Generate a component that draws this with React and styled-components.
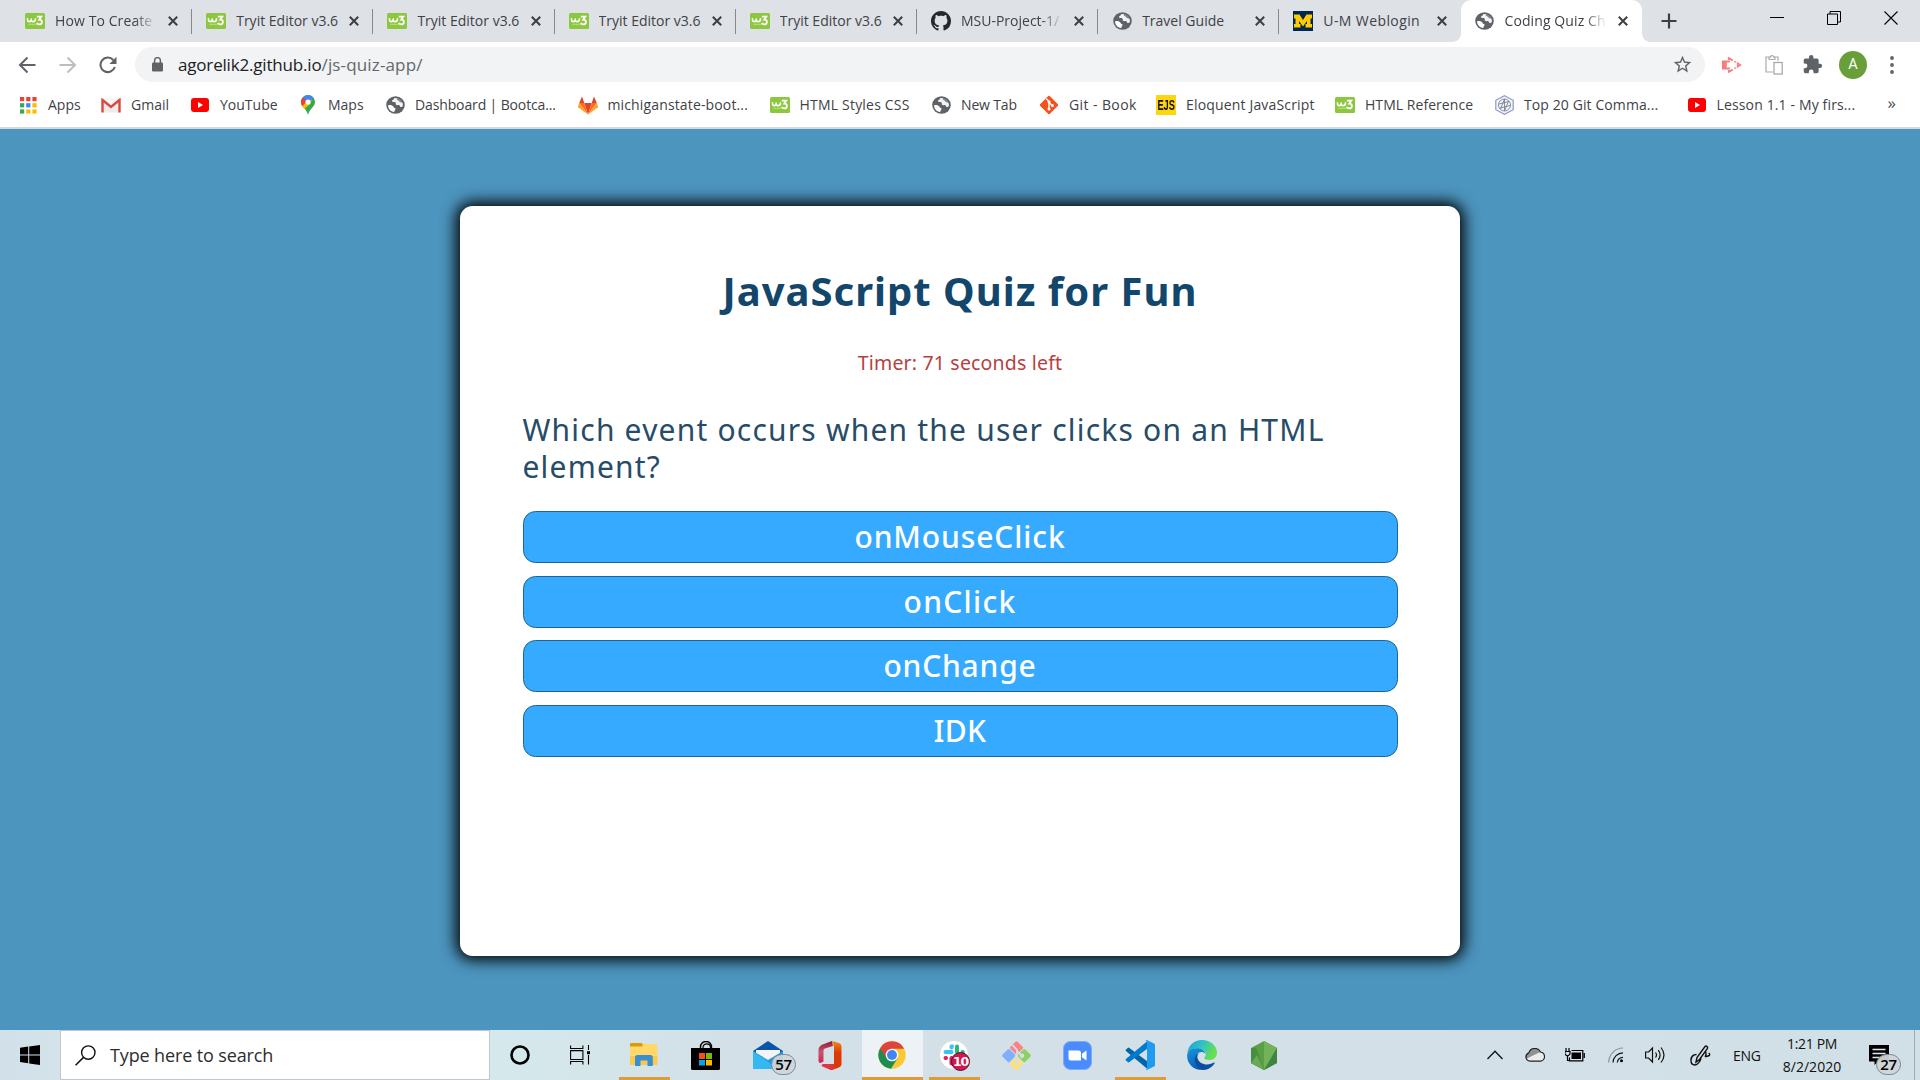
import React from "react";
import styled, { createGlobalStyle } from "styled-components";

const GlobalStyle = createGlobalStyle`
  * { box-sizing: border-box; }
  html, body { margin: 0; padding: 0; }
  body { font-family: "Open Sans", "Noto Sans", sans-serif; overflow: hidden; }
  svg { display: block; flex: none; }
`;

const Screen = styled.div`
  width: 1920px;
  height: 1080px;
  display: flex;
  flex-direction: column;
  overflow: hidden;
  background: #fff;
`;

/* ---------- tab strip ---------- */
const TabStrip = styled.div`
  height: 42px;
  display: flex;
  background: #dee1e6;
  padding-left: 11px;
`;

const Tab = styled.div`
  position: relative;
  width: 181.2px;
  flex: none;
  display: flex;
  align-items: center;
  padding: 0 14px 0 14px;
  background: ${(p) => (p.$active ? "#fff" : "transparent")};
  border-radius: 10px 10px 0 0;
  &::after {
    content: "";
    display: ${(p) => (p.$divider ? "block" : "none")};
    position: absolute;
    right: 0;
    top: 9px;
    width: 1px;
    height: 25px;
    background: #85888c;
  }
`;

const Flare = styled.i`
  position: absolute;
  bottom: 0;
  ${(p) => p.$side}: -8px;
  width: 8px;
  height: 8px;
  background: radial-gradient(
    circle at ${(p) => (p.$side === "left" ? "0 0" : "100% 0")},
    transparent 7.5px,
    #fff 8px
  );
`;

const TabIcon = styled.span`
  width: 20px;
  height: 20px;
  display: grid;
  place-items: center;
  flex: none;
`;

const TabTitle = styled.span`
  width: 102px;
  margin-left: 10px;
  overflow: hidden;
  white-space: nowrap;
  font-size: 14px;
  line-height: 22px;
  letter-spacing: ${(p) => p.$ls || 0}px;
  color: #3f4246;
  ${(p) => p.$fade && "mask-image: linear-gradient(90deg, #000 78%, transparent 100%);"}
`;

const TabClose = styled.span`
  margin-left: auto;
`;

const NewTab = styled.div`
  width: 54px;
  display: grid;
  place-items: center;
`;

const WindowControls = styled.div`
  margin-left: auto;
  display: flex;
  padding-bottom: 6px;
`;

const WindowButton = styled.div`
  width: ${(p) => p.$w || 57.5}px;
  display: grid;
  place-items: center;
`;

/* ---------- toolbar ---------- */
const Toolbar = styled.div`
  height: 45px;
  display: flex;
  align-items: center;
  padding-left: 18px;
`;

const NavButton = styled.div`
  width: ${(p) => p.$w}px;
  display: flex;
`;

const AddressBar = styled.div`
  width: 1570px;
  height: 35px;
  border-radius: 18px;
  background: #f1f3f4;
  display: flex;
  align-items: center;
  padding: 0 12px 0 17px;
`;

const Url = styled.span`
  margin-left: 15px;
  flex: 1;
  font-size: 17px;
  line-height: 26px;
  letter-spacing: -0.18px;
  color: #202124;
`;

const UrlPath = styled.span`
  letter-spacing: 0.15px;
  color: #63676c;
`;

const Extensions = styled.div`
  flex: 1;
  display: flex;
  align-items: center;
  padding-left: 17px;
`;

const ExtensionSlot = styled.div`
  width: ${(p) => p.$w}px;
  display: flex;
`;

const Avatar = styled.div`
  width: 28px;
  height: 28px;
  border-radius: 50%;
  background: #689f38;
  color: #fff;
  display: grid;
  place-items: center;
  font: 14.5px Roboto, sans-serif;
`;

/* ---------- bookmarks ---------- */
const BookmarkBar = styled.div`
  height: 42px;
  display: flex;
  align-items: center;
  padding: 0 0 4px 18px;
  border-bottom: 2px solid #d5d8dc;
`;

const Bookmark = styled.div`
  width: ${(p) => p.$w}px;
  flex: none;
  display: flex;
  align-items: center;
`;

const BookmarkIcon = styled.span`
  width: 20px;
  height: 22px;
  display: grid;
  place-items: center;
`;

const BookmarkLabel = styled.span`
  margin: 0 0 1px 10px;
  white-space: nowrap;
  font-size: 14px;
  line-height: 22px;
  letter-spacing: ${(p) => p.$ls || 0}px;
  color: #3f4246;
`;

const Overflow = styled.span`
  font-size: 17px;
  line-height: 20px;
  color: #4a4d51;
  padding-bottom: 4px;
`;

/* ---------- quiz page ---------- */
const Page = styled.main`
  height: 901px;
  background: #4c95bf;
  display: flex;
  justify-content: center;
  align-items: flex-start;
  padding-top: 77px;
  font-family: "Noto Sans", "Open Sans", sans-serif;
`;

const QuizCard = styled.section`
  width: 1000px;
  height: 750px;
  border-radius: 12.5px;
  background: #fff;
  box-shadow: 0 0 15px 4px #000;
  display: flex;
  flex-direction: column;
  padding: 60px 62.5px 0;
`;

const Title = styled.h1`
  margin: 0;
  font-size: 40px;
  font-weight: 700;
  line-height: 50px;
  letter-spacing: 1px;
  text-align: center;
  color: #12466b;
`;

const Timer = styled.p`
  margin: 35px 0 0;
  font-size: 19.5px;
  line-height: 24px;
  letter-spacing: 0.18px;
  text-align: center;
  color: #b5413f;
`;

const Question = styled.p`
  margin: 36px 0 0;
  font-size: 30px;
  line-height: 37px;
  letter-spacing: 1.2px;
  color: #264c68;
`;

const Choices = styled.div`
  margin-top: 26px;
  display: flex;
  flex-direction: column;
  gap: 12.5px;
`;

const Choice = styled.button`
  height: 52px;
  border: 1px solid #1a669b;
  border-radius: 12.5px;
  background: #35aaff;
  color: #fff;
  padding: 0 0 1px;
  font-family: inherit;
  font-size: 30px;
  font-weight: 500;
  line-height: 49px;
  letter-spacing: ${(p) => p.$ls}px;
`;

/* ---------- taskbar ---------- */
const Taskbar = styled.footer`
  height: 50px;
  display: flex;
  background: linear-gradient(90deg, #d2e0e9 0, #d4e3ea 60px, #d5e8eb 500px, #d4e6ea 590px, #d3e0e8 720px, #d3e0e7 1400px, #d1dfe7 100%);
`;

const StartButton = styled.div`
  width: 60px;
  display: grid;
  place-items: center;
`;

const SearchBox = styled.div`
  width: 430px;
  border: 1px solid #c3c6c9;
  background: #fff;
  display: flex;
  align-items: center;
  padding-left: 14px;
`;

const SearchText = styled.span`
  margin-left: 14px;
  font-size: 18px;
  line-height: 28px;
  letter-spacing: -0.13px;
  color: #2d2d2d;
`;

const TaskButton = styled.div`
  width: ${(p) => p.$w || 62}px;
  flex: none;
  display: flex;
  align-items: center;
  justify-content: center;
  padding-right: ${(p) => p.$nudge || 0}px;
  background: ${(p) => (p.$focused ? "#edf2f6" : "transparent")};
  box-shadow: ${(p) => (p.$focused ? "inset 0 -3px #e09a3b" : "none")};
`;

const OpenMark = styled.div`
  width: 51px;
  height: 50px;
  border-bottom: 3px solid ${(p) => (p.$open ? "#e09a3b" : "transparent")};
  display: grid;
  place-items: center;
  padding-top: 3px;
`;

const IconWithBadge = styled.div`
  position: relative;
  margin-left: ${(p) => p.$indent || 0}px;
`;

const Badge = styled.span`
  position: absolute;
  left: ${(p) => p.$x}px;
  top: ${(p) => p.$y}px;
  width: 25px;
  height: 21px;
  border-radius: 11px;
  border: 1px solid #7f8588;
  background: rgba(207, 213, 216, 0.94);
  color: #000;
  font-size: 15px;
  font-weight: 600;
  line-height: 19px;
  letter-spacing: -0.4px;
  text-align: center;
`;

const SlackBadge = styled.span`
  position: absolute;
  left: 12px;
  top: 12px;
  width: 19px;
  height: 19px;
  border-radius: 50%;
  border: 1px solid #4a1230;
  background: #d5174f;
  color: #fff;
  font: 700 12.5px/17px "DejaVu Sans", sans-serif;
  letter-spacing: -1.2px;
  text-align: center;
`;

const Tray = styled.div`
  margin-left: auto;
  display: flex;
  align-items: center;
`;

const TraySlot = styled.div`
  width: ${(p) => p.$w}px;
  display: flex;
`;

const Language = styled.span`
  width: 49px;
  font-size: 14px;
  line-height: 22px;
  letter-spacing: -0.3px;
  color: #111;
  padding-top: 1px;
`;

const Clock = styled.div`
  width: 60px;
  display: flex;
  flex-direction: column;
  align-items: center;
  font-size: 14px;
  line-height: 23px;
  color: #111;
`;

const ClockTime = styled.span`
  letter-spacing: -0.35px;
`;

const ShowDesktop = styled.div`
  align-self: stretch;
  width: 6px;
  border-left: 1px solid #9eabb3;
`;

/* ---------- icons ---------- */
const W3Icon = () => (
  <svg width="20" height="16" viewBox="0 0 20 16">
    <rect width="20" height="16" rx="1.5" fill="#8dc73f" />
    <path d="M2.500 5.200v1.800q0 1.600 1.700 1.600T6.200 7V5.600V7q0 1.600 1.900 1.600T10.400 7V5.200" fill="none" stroke="#fff" strokeWidth="1.600" />
    <path d="M11.800 3.600h4.600L14.200 6.600q2.700 0 2.700 2.300 0 2.500-2.600 2.500-1.700 0-2.500-1.500" fill="none" stroke="#fff" strokeWidth="1.700" />
    <path d="M3.500 11.300h8" stroke="#cfe8ac" strokeWidth="1" strokeDasharray="1.200 .5" />
  </svg>
);

const GlobeIcon = () => (
  <svg width="19" height="18" viewBox="0 0 18 18" preserveAspectRatio="none">
    <circle cx="9" cy="9" r="8.800" fill="#5f6368" />
    <path d="M2 9.200c2-.4 3.600.1 4.700 1 .8.700.5 1.400 1.500 1.700 1.300.3.900 1.300.3 2-.5.700-.4 1.400-.7 2.200C4.300 15.600 1.900 12.600 2 9.200z" fill="#fff" />
    <path d="M8 1.900c-1 1-.5 1.600-1.700 2.200-.8.400-.9 1.300-.2 1.700 1 .5 2.100-.2 2.900.6.700.9-.2 1.700.6 2.400 1 .8 2.200-.2 3 .4.900.7.600 1.900 1.600 1.900.9 0 1.500-.6 1.800-1.600.4-3.600-2.600-7.800-8-7.600z" fill="#fff" opacity=".92" />
    <path d="M10.500 2.200c-.6.900 0 1.900 1 2.200 1.200.3 1.400 1 1.300 1.700l2.900.7C15 4.300 13 2.500 10.500 2.200z" fill="#5f6368" opacity=".75" />
  </svg>
);

const GithubIcon = () => (
  <svg width="20" height="20" viewBox="0 0 16 16">
    <path fill="#24292e" d="M8 0C3.580 0 0 3.580 0 8c0 3.540 2.290 6.530 5.470 7.590.4.070.55-.17.55-.38 0-.19-.01-.82-.01-1.490-2.010.37-2.530-.49-2.690-.94-.09-.23-.48-.94-.82-1.130-.28-.15-.68-.52-.01-.53.63-.01 1.080.58 1.230.82.72 1.210 1.870.87 2.330.66.07-.52.28-.87.51-1.070-1.780-.2-3.640-.89-3.640-3.950 0-.87.31-1.590.82-2.150-.08-.2-.36-1.020.08-2.120 0 0 .67-.21 2.200.82.64-.18 1.320-.27 2-.27s1.360.09 2 .27c1.530-1.040 2.200-.82 2.200-.82.44 1.100.16 1.920.08 2.120.51.56.82 1.270.82 2.150 0 3.070-1.870 3.750-3.650 3.950.29.25.54.73.54 1.480 0 1.070-.01 1.930-.01 2.200 0 .21.15.46.55.38A8.010 8.010 0 0 0 16 8c0-4.420-3.580-8-8-8z" />
  </svg>
);

const MichiganIcon = () => (
  <svg width="20" height="20" viewBox="0 0 20 20">
    <rect width="20" height="20" fill="#00274c" />
    <path fill="#ffcb05" d="M1 3.500h5.500L10 9l3.500-5.500H19v4h-1.500V13H19v3.500h-6.500V13H14v-3l-4 5.500L6 10v3h1.500v3.500H1V13h1.500V7.500H1z" />
  </svg>
);

const CloseIcon = () => (
  <svg width="10" height="10" viewBox="0 0 10 10">
    <path d="M.8.8l8.400 8.400M9.200.8L.8 9.200" stroke="#3c4043" strokeWidth="2" />
  </svg>
);

const BackIcon = ({ color, flip }) => (
  <svg width="18" height="18" viewBox="0 0 18 18" transform={flip ? "scale(-1,1)" : undefined}>
    <path d="M17.500 9H2.200M9.500 1.500L2 9l7.500 7.500" fill="none" stroke={color} strokeWidth="2" />
  </svg>
);

const ReloadIcon = () => (
  <svg width="18" height="18" viewBox="0 0 18 18">
    <path d="M15.800 11A7.300 7.300 0 1 1 14.300 4" fill="none" stroke="#5f6368" strokeWidth="2.100" />
    <path d="M17.500.8v7.100h-7.100z" fill="#5f6368" />
  </svg>
);

const LockIcon = () => (
  <svg width="11" height="15" viewBox="0 0 11 15">
    <rect y="5.500" width="11" height="9" rx="1.200" fill="#5f6368" />
    <path d="M2.600 6V3.500a2.900 2.900 0 0 1 5.800 0V6" fill="none" stroke="#5f6368" strokeWidth="1.500" />
  </svg>
);

const StarIcon = () => (
  <svg width="21" height="21" viewBox="0 0 24 24">
    <path fill="#5f6368" d="M22 9.240l-7.190-.62L12 2 9.190 8.630 2 9.240l5.460 4.730L5.820 21 12 17.270 18.180 21l-1.630-7.030L22 9.240zM12 15.400l-3.760 2.270 1-4.280-3.320-2.880 4.380-.38L12 6.100l1.710 4.040 4.380.38-3.320 2.880 1 4.280L12 15.400z" />
  </svg>
);

const CastIcon = () => (
  <svg width="20" height="16" viewBox="0 0 20 16">
    <rect y="3.500" width="4.800" height="9" fill="#f47c7c" />
    <path d="M4.500 4.500h3.500M4.500 11.500h3.500M6.800 3V1.200l4 2.200M6.800 13v1.800l4-2.200" fill="none" stroke="#f58080" strokeWidth="1.900" />
    <path d="M12.300 4.300L14 5.200M12.300 11.700L14 10.800" fill="none" stroke="#f79a9a" strokeWidth="2" />
    <path d="M14.800 4.800L20 8l-5.200 3.200z" fill="#f68686" />
  </svg>
);

const ClipboardIcon = () => (
  <svg width="18" height="21" viewBox="0 0 18 21">
    <path d="M8 18H1V3h12v4" fill="none" stroke="#a9abad" strokeWidth="1.200" />
    <path d="M4 5.500V3.200h1.500a1.600 1.600 0 0 1 3.200 0H10v2.300z" fill="#fff" stroke="#a9abad" strokeWidth="1.100" />
    <rect x="9" y="8.500" width="8.200" height="11.500" fill="#fff" stroke="#a0a2a4" strokeWidth="1.200" />
  </svg>
);

const PuzzleIcon = () => (
  <svg width="21" height="21" viewBox="0 0 24 24">
    <path fill="#5f6368" d="M20.500 11H19V7c0-1.100-.9-2-2-2h-4V3.500a2.500 2.500 0 0 0-5 0V5H4c-1.100 0-2 .9-2 2v3.800h1.500a2.700 2.700 0 0 1 0 5.400H2V20c0 1.100.9 2 2 2h3.800v-1.500a2.700 2.700 0 0 1 5.400 0V22H17c1.100 0 2-.9 2-2v-4h1.500a2.500 2.500 0 0 0 0-5z" />
  </svg>
);

const MenuDots = () => (
  <svg width="4" height="18" viewBox="0 0 4 18">
    <circle cx="2" cy="2" r="1.900" fill="#5f6368" />
    <circle cx="2" cy="9" r="1.900" fill="#5f6368" />
    <circle cx="2" cy="16" r="1.900" fill="#5f6368" />
  </svg>
);

const AppsIcon = () => {
  const colors = ["#ea4335", "#ea4335", "#ea4335", "#34a853", "#4285f4", "#fbbc05", "#34a853", "#fbbc05", "#fbbc05"];
  return (
    <svg width="17" height="17" viewBox="0 0 17 17">
      {colors.map((c, i) => (
        <rect key={i} x={(i % 3) * 6.200} y={Math.floor(i / 3) * 6.200} width="4.200" height="4.200" fill={c} />
      ))}
    </svg>
  );
};

const GmailIcon = () => (
  <svg width="20" height="15" viewBox="0 0 20 15">
    <rect x="1" y=".5" width="18" height="14" rx="1" fill="#ececec" />
    <path d="M1.500 14.500V2L10 9l8.500-7v12.500" fill="none" stroke="#d9493f" strokeWidth="2.400" />
    <path d="M3 .5h14L10 6.500z" fill="#f7f7f7" />
  </svg>
);

const YoutubeIcon = () => (
  <svg width="18" height="14" viewBox="0 0 18 14">
    <rect width="18" height="14" rx="3" fill="#f00" />
    <path d="M7 4v6l5-3z" fill="#fff" />
  </svg>
);

const MapsIcon = () => (
  <svg width="14" height="20" viewBox="0 0 14 20">
    <path d="M7 0a7 7 0 0 1 7 7c0 5-5.500 6.500-7 13C5.500 13.500 0 12 0 7a7 7 0 0 1 7-7z" fill="#34a853" />
    <path d="M14 7c0-1-.1-1.600-.4-2.300L1.200 11l1.900 2.200z" fill="#fbbc04" opacity="0" />
    <path d="M11.500 2.500L1 10.800q1 1.700 2.500 3.200L9 9z" fill="#fbbc04" />
    <path d="M7 0a7 7 0 0 1 5.400 2.500L7 8 1.700 2.500A7 7 0 0 1 7 0z" fill="#4285f4" />
    <path d="M1.700 2.500L6 6l-4.800 5.200C-.5 8.500-.5 5 1.700 2.500z" fill="#ea4335" />
    <circle cx="7" cy="7" r="2.600" fill="#fff" />
  </svg>
);

const GitlabIcon = () => (
  <svg width="20" height="19" viewBox="0 0 20 19">
    <path d="M10 18.500L13.700 7H6.300z" fill="#e24329" />
    <path d="M10 18.500L6.300 7H1.200zM10 18.500L13.700 7h5.100z" fill="#fc6d26" />
    <path d="M1.200 7L0 10.600c-.1.400 0 .7.300 1L10 18.500zM18.800 7L20 10.600c.1.400 0 .7-.3 1L10 18.500z" fill="#fca326" />
    <path d="M1.200 7h5.100L4 .5zM18.800 7h-5.100L16 .5z" fill="#e24329" />
  </svg>
);

const GitIcon = () => (
  <svg width="20" height="20" viewBox="0 0 20 20">
    <rect x="3.200" y="3.200" width="13.600" height="13.600" rx="1" transform="rotate(45 10 10)" fill="#f4511e" />
    <path d="M7.300 3.800L10 6.500v7.800M10 7.500l3.200 3" stroke="#fff" strokeWidth="1.400" fill="none" />
    <circle cx="10" cy="6.800" r="1.500" fill="#fff" />
    <circle cx="10" cy="14" r="1.500" fill="#fff" />
    <circle cx="13.400" cy="10.500" r="1.500" fill="#fff" />
  </svg>
);

const EjsBox = styled.span`
  width: 20px;
  height: 20px;
  background: #fdd70b;
  color: #111;
  font: 700 15px/20px "Liberation Sans", sans-serif;
  display: flex;
  justify-content: center;
`;
const EjsText = styled.span`
  transform: scaleX(0.62);
`;
const EjsIcon = () => (
  <EjsBox>
    <EjsText>EJS</EjsText>
  </EjsBox>
);

const HexIcon = () => (
  <svg width="21" height="20" viewBox="0 0 21 20">
    <path d="M10.500.7l8.700 4.600v9.400l-8.700 4.600-8.700-4.600V5.300z" fill="#f2f5fb" stroke="#8b9bc9" strokeWidth="1.200" />
    <circle cx="10.500" cy="10" r="6" fill="none" stroke="#8a8f9c" strokeWidth="1" />
    <path d="M6.500 14l4-10v12l4-10M5 9l10-2.500M6 13l10-2.500" fill="none" stroke="#7b8190" strokeWidth=".9" />
  </svg>
);

const WindowsIcon = () => (
  <svg width="20" height="20" viewBox="0 0 20 20">
    <path d="M0 2.800l8.200-1.200v7.800H0zM9.200 1.500L20 0v9.400H9.200zM0 10.400h8.200v7.800L0 17zM9.200 10.400H20V20L9.200 18.400z" />
  </svg>
);

const SearchIcon = () => (
  <svg width="21" height="21" viewBox="0 0 21 21">
    <circle cx="13.300" cy="7.600" r="6.700" fill="none" stroke="#111" strokeWidth="1.400" />
    <path d="M8.500 12.400L.6 20.300" stroke="#111" strokeWidth="1.500" />
  </svg>
);

const CortanaIcon = () => (
  <svg width="20" height="20" viewBox="0 0 20 20">
    <circle cx="10" cy="10" r="8.500" fill="none" stroke="#000" strokeWidth="2.600" />
  </svg>
);

const TaskViewIcon = () => (
  <svg width="21" height="20" viewBox="0 0 21 20">
    <path d="M.6.500v3h12.300v-3M.6 19.500v-3h12.300v3M.6 5.600h12.300v8.900H.6zM18.500 0v5M18.500 10v9.500" fill="none" stroke="#000" strokeWidth="1.100" />
    <rect x="17" y="6.200" width="3" height="3" />
  </svg>
);

const FolderIcon = () => (
  <svg width="28" height="24" viewBox="0 0 28 24">
    <path d="M0 1q0-1 1-1h10.500l1.500 1.500V4H0z" fill="#dd9a0a" />
    <path d="M0 3.500h12L13.500 1H26q1.300 0 1.300 1.200V21q0 1-1 1H1q-1 0-1-1z" fill="#ffd868" />
    <path d="M0 13h27.300v8q0 1-1 1H1q-1 0-1-1z" fill="#fbc94b" />
    <path d="M5 23v-8.500Q5 12 7.500 12h12.800q2.500 0 2.500 2.500V23h-5.300v-5.500h-7V23z" fill="#3a8fd3" />
  </svg>
);

const StoreIcon = () => (
  <svg width="29" height="29" viewBox="0 0 29 29">
    <path d="M9.500 7.500V6a5.500 5.500 0 0 1 11 0v1.500" fill="none" stroke="#000" strokeWidth="1.400" />
    <path d="M12 7.500V6a3.800 3.800 0 0 1 7.500 0v1.500" fill="none" stroke="#000" strokeWidth="1.200" />
    <path d="M0 7h29v20.500q0 1.500-1.500 1.500h-26Q0 29 0 27.500z" />
    <path d="M8 12h6v6H8z" fill="#f25022" />
    <path d="M15 12h6v6h-6z" fill="#7fba00" />
    <path d="M8 19h6v5.500H8z" fill="#00a4ef" />
    <path d="M15 19h6v5.500h-6z" fill="#ffb900" />
  </svg>
);

const MailIcon = () => (
  <svg width="30" height="28" viewBox="0 0 30 28">
    <path d="M0 10L15 0l15 10v9H0z" fill="#0a55a8" />
    <path d="M3 9h24v6l-12 6L3 15z" fill="#f4f4f4" />
    <path d="M0 10l15 9L30 10v16.500q0 1.500-1.500 1.500h-27Q0 28 0 26.500z" fill="#1f9be6" />
    <path d="M0 10l25 17.900H1.500Q0 28 0 26.500z" fill="#35b8f1" />
  </svg>
);

const OfficeIcon = () => (
  <svg width="24" height="29" viewBox="0 0 24 29">
    <defs>
      <linearGradient id="of1" x1="0" y1="0" x2="0" y2="1">
        <stop offset="0" stopColor="#8f1b2b" />
        <stop offset=".5" stopColor="#c8566f" />
        <stop offset="1" stopColor="#d3204e" />
      </linearGradient>
      <linearGradient id="of2" x1="0" y1="0" x2="0" y2="1">
        <stop offset="0" stopColor="#f08a1c" />
        <stop offset=".4" stopColor="#dd3a05" />
        <stop offset="1" stopColor="#d83b01" />
      </linearGradient>
    </defs>
    <path d="M14 0L4 3.800Q.5 5.500.5 9v11q0 2 2 2l3-1.500V9.500Q5.500 8 7 7.500L15 5z" fill="url(#of1)" />
    <path d="M14 0l7 2q2.500.8 2.500 3.500v17.800q0 2.500-2.500 3.300L14 29l2-6V5z" fill="url(#of2)" />
    <path d="M5 23h11v4.500q-.5 1.500-2.500 1.500-1 0-2-.5L4.500 25.500Q2.500 24 5 23z" fill="#e0343f" />
  </svg>
);

const ChromeIcon = () => (
  <svg width="28" height="28" viewBox="0 0 28 28">
    <circle cx="14" cy="14" r="13.700" fill="#fcc934" />
    <path d="M14 14L2.100 7.200A13.700 13.700 0 0 0 13 27.700l6.500-10.500z" fill="#1e8e50" />
    <path d="M14 14v-6.300h12.200A13.700 13.700 0 0 0 2.100 7.200L8.500 17z" fill="#de4439" />
    <circle cx="14" cy="14" r="6.300" fill="#fff" />
    <circle cx="14" cy="14" r="5" fill="#4285f4" />
  </svg>
);

const SlackIcon = () => (
  <svg width="30" height="30" viewBox="0 0 30 30">
    <circle cx="15" cy="15" r="14.500" fill="#fff" stroke="#d5d8da" strokeWidth=".8" />
    <g fill="none" strokeLinecap="round" strokeWidth="4">
      <path d="M6.500 12h6M13 6.200h0M12.500 6.500v1" stroke="#36c5f0" />
      <path d="M18 6.500V12M23.500 12h.3" stroke="#2eb67d" />
      <path d="M6.500 18h.5M12.500 18v5.500" stroke="#e01e5a" />
      <path d="M18 18h6" stroke="#ecb22e" />
    </g>
  </svg>
);

const GitBashIcon = () => (
  <svg width="31" height="31" viewBox="0 0 31 31">
    <g transform="rotate(45 15.500 15.500)">
      <rect x="5" y="5" width="10.100" height="10.100" rx="1.500" fill="#fb8383" />
      <rect x="16" y="5" width="10.100" height="10.100" rx="1.500" fill="#8fd160" />
      <rect x="5" y="16" width="10.100" height="10.100" rx="1.500" fill="#7fb0ff" />
      <rect x="16" y="16" width="10.100" height="10.100" rx="1.500" fill="#ffe07a" />
    </g>
    <path d="M11 4.500l5 5.500v13M16 11l5 5" stroke="#d3e0e8" strokeWidth="1.800" fill="none" />
    <circle cx="16" cy="22" r="2.300" fill="#d3e0e8" />
    <circle cx="21" cy="15.800" r="2.300" fill="#d3e0e8" />
  </svg>
);

const ZoomIcon = () => (
  <svg width="29" height="29" viewBox="0 0 29 29">
    <rect x=".5" y=".5" width="28" height="28" rx="7" fill="#4a8cff" stroke="#7fabef" />
    <path d="M5.500 9.500h10q2.500 0 2.500 2.500v7.500H8q-2.500 0-2.500-2.500zM19 12.800l4.500-3.300v10L19 16.300z" fill="#fff" />
  </svg>
);

const VsCodeIcon = () => (
  <svg width="30" height="30" viewBox="0 0 30 30">
    <path d="M1 9.500l2-1.700q.7-.4 1.400.1L22.500 21.500V29L.9 11q-.6-.8.1-1.500z" fill="#0065a9" />
    <path d="M1 20.500l2 1.700q.7.400 1.400-.1L22.500 8.500V1L.9 19q-.6.800.1 1.500z" fill="#007acc" />
    <path d="M22.300 29.800q-1.500.3-1.800-.5.800.3 1.500-.6V1.300q-.7-.9-1.500-.6.500-.9 1.800-.5L29 3.400q1 .5 1 1.700v19.800q0 1.200-1 1.700z" fill="#1f9cf0" />
  </svg>
);

const EdgeIcon = () => (
  <svg width="30" height="30" viewBox="0 0 30 30">
    <defs>
      <linearGradient id="ed1" x1="0" y1="0" x2="1" y2=".4">
        <stop offset="0" stopColor="#2199d6" />
        <stop offset=".5" stopColor="#2fc2c6" />
        <stop offset="1" stopColor="#67e04e" />
      </linearGradient>
      <linearGradient id="ed2" x1="0" y1="0" x2=".4" y2="1">
        <stop offset="0" stopColor="#1697dd" />
        <stop offset="1" stopColor="#0a5cb8" />
      </linearGradient>
    </defs>
    <path d="M.2 14C1 5.500 7 0 15 0c8.500 0 15 6 15 12.500 0 5-3.500 7.500-7.500 7.500-3.300 0-5.200-1-5.200-2 0-.9 1.400-1.300 1.400-3.600 0-3.500-3.600-5.900-8.200-5.900C5 8.500 1 11 .2 14z" fill="url(#ed1)" />
    <path d="M.1 15.500C.5 11 4.500 8.200 10 8.200c4.600 0 8 2.500 8.300 5.600-1-1.300-2.300-1.800-3.800-1.800-4 0-5.500 3.200-5.500 6.500 0 5.500 4 10 9.500 11C8.500 31.500 0 25 .1 15.500z" fill="url(#ed2)" />
    <path d="M12.300 13c-1.800 1.500-2.300 3.500-1.700 5.500 1.200 3.700 5 6 9.400 6 3 0 5-.8 6.800-1.900.8-.3 1.100.3.700.9C24.500 28 19.500 30.500 15 29.800 9.500 28 7.500 23 8 18.500c.3-3 2-5 4.300-5.500z" fill="#0c4f9c" />
  </svg>
);

const NodeIcon = () => (
  <svg width="26" height="29" viewBox="0 0 26 29">
    <path d="M13 0l13 7v15l-13 7-13-7V7z" fill="#5a9e45" />
    <path d="M13 0l13 7-13 22z" fill="#74b257" />
    <path d="M26 7v15l-13 7z" fill="#3f8440" />
    <path d="M0 7l5 0 8 22-13-7z" fill="#478e3f" />
    <path d="M0 22l6-8 7 15z" fill="#69a953" />
  </svg>
);

const CloudIcon = () => (
  <svg width="20" height="14" viewBox="0 0 20 14">
    <path d="M5 13.200a4.300 4.300 0 0 1-1.200-8.300A6.300 6.300 0 0 1 15.500 4 4.700 4.700 0 0 1 16 13.200z" fill="#ececee" />
    <path d="M1 11A4.300 4.300 0 0 1 3.800 4.900 6.300 6.300 0 0 1 15.500 4L9 7z" fill="#8f9396" />
    <path d="M5 13.200a4.300 4.300 0 0 1-1.200-8.300A6.300 6.300 0 0 1 15.500 4 4.700 4.700 0 0 1 16 13.200z" fill="none" stroke="#222" strokeWidth="1.200" />
  </svg>
);

const BatteryIcon = () => (
  <svg width="20" height="14" viewBox="0 0 20 14">
    <path d="M6.500 2.500h11.300v10.300H4.500V9.500M19.300 5v5M1 0v3M4 0v3M0 3.500h5v2.500q-1 1.800-2.500 1.800T0 6zM2.500 8v4.500h2" fill="none" stroke="#000" strokeWidth="1.200" />
    <path d="M6.500 4.500h9.500v6.500H6.500z" />
  </svg>
);

const WifiIcon = () => (
  <svg width="16" height="16" viewBox="0 0 16 16">
    <circle cx="13.500" cy="13.800" r="1.500" />
    <path d="M9.300 15.500a5.500 5.500 0 0 1 5.700-5.200M5 15.500A10 10 0 0 1 15 5.800" fill="none" stroke="#111" strokeWidth="1.200" />
    <path d="M.7 15.500A14.500 14.500 0 0 1 15 1" fill="none" stroke="#8b9499" strokeWidth="1.200" />
  </svg>
);

const SpeakerIcon = () => (
  <svg width="21" height="18" viewBox="0 0 21 18">
    <path d="M.6 6h3L7.500 2v14L3.600 12h-3zM10.500 6.500q2 2.500 0 5M13.300 4.200q3.600 4.800 0 9.600M16 1.500q6 7.500 0 15" fill="none" stroke="#111" strokeWidth="1.200" />
  </svg>
);

const PenIcon = () => (
  <svg width="21" height="21" viewBox="0 0 21 21">
    <path d="M6 17l1-4.500L15 1.500q1-1 2 0t.3 2.200L9.500 14.500zM6.500 9.500C3 9.500 1 12 1 15.500c0 3 2 4.500 4 4.500 3 0 5.500-4.500 6-7M15.500 6.500q1 3 0 4.500t3.800-.5q.8-1.500-.5-2.500" fill="none" stroke="#111" strokeWidth="1.400" />
  </svg>
);

const NotificationIcon = () => (
  <svg width="20" height="21" viewBox="0 0 20 21">
    <path d="M0 0h20v16.500H9L5.500 20v-3.500H0z" />
    <path d="M3.500 4.500h13M3.500 8.500h13M3.500 12.500h8" stroke="#dde7ec" strokeWidth="1.300" />
  </svg>
);

/* ---------- content ---------- */
const tabs = [
  { icon: <W3Icon />, title: "How To Create", fade: true, ls: 0.1 },
  { icon: <W3Icon />, title: "Tryit Editor v3.6" },
  { icon: <W3Icon />, title: "Tryit Editor v3.6" },
  { icon: <W3Icon />, title: "Tryit Editor v3.6" },
  { icon: <W3Icon />, title: "Tryit Editor v3.6" },
  { icon: <GithubIcon />, title: "MSU-Project-1/", fade: true },
  { icon: <GlobeIcon />, title: "Travel Guide" },
  { icon: <MichiganIcon />, title: "U-M Weblogin", ls: 0.4 },
  { icon: <GlobeIcon />, title: "Coding Quiz Ch", fade: true, ls: 0.1, active: true },
];

const bookmarks = [
  { icon: <AppsIcon />, label: "Apps", w: 83 },
  { icon: <GmailIcon />, label: "Gmail", w: 89 },
  { icon: <YoutubeIcon />, label: "YouTube", w: 108 },
  { icon: <MapsIcon />, label: "Maps", w: 87 },
  { icon: <GlobeIcon />, label: "Dashboard | Bootca...", w: 192.500, ls: -0.13 },
  { icon: <GitlabIcon />, label: "michiganstate-boot...", w: 192, ls: 0.14 },
  { icon: <W3Icon />, label: "HTML Styles CSS", w: 161.500, ls: 0.2 },
  { icon: <GlobeIcon />, label: "New Tab", w: 108, ls: -0.15 },
  { icon: <GitIcon />, label: "Git - Book", w: 117, ls: 0.4 },
  { icon: <EjsIcon />, label: "Eloquent JavaScript", w: 179, ls: 0.17 },
  { icon: <W3Icon />, label: "HTML Reference", w: 159, ls: 0.05 },
  { icon: <HexIcon />, label: "Top 20 Git Comma...", w: 192.500, ls: 0.1 },
  { icon: <YoutubeIcon />, label: "Lesson 1.1 - My firs...", w: 201, ls: 0.14 },
];

const choices = [
  { label: "onMouseClick", ls: 0.9 },
  { label: "onClick", ls: 1.300 },
  { label: "onChange", ls: 0.800 },
  { label: "IDK", ls: 0.300 },
];

export default function App() {
  return (
    <Screen>
      <GlobalStyle />
      <TabStrip>
        {tabs.map((t, i) => (
          <Tab key={i} $active={t.active} $divider={i < 7}>
            {t.active && <Flare $side="left" />}
            {t.active && <Flare $side="right" />}
            <TabIcon>{t.icon}</TabIcon>
            <TabTitle $fade={t.fade} $ls={t.ls}>{t.title}</TabTitle>
            <TabClose><CloseIcon /></TabClose>
          </Tab>
        ))}
        <NewTab>
          <svg width="16" height="16" viewBox="0 0 16 16">
            <path d="M8 .5v15M.5 8h15" stroke="#3c4043" strokeWidth="2.200" />
          </svg>
        </NewTab>
        <WindowControls>
          <WindowButton $w={58}>
            <svg width="14" height="14" viewBox="0 0 14 14"><path d="M0 6.500h14" stroke="#000" /></svg>
          </WindowButton>
          <WindowButton $w={56}>
            <svg width="14" height="14" viewBox="0 0 14 14">
              <path d="M.5 3h10v10.500H.5zM3 3V.5h10.500V11h-3" fill="none" stroke="#000" />
            </svg>
          </WindowButton>
          <WindowButton $w={58}>
            <svg width="14" height="14" viewBox="0 0 14 14">
              <path d="M.5.5l13 13M13.500.5l-13 13" stroke="#000" strokeWidth="1.100" />
            </svg>
          </WindowButton>
        </WindowControls>
      </TabStrip>

      <Toolbar>
        <NavButton $w={41}><BackIcon color="#5f6368" /></NavButton>
        <NavButton $w={40}><BackIcon color="#bcbec1" flip /></NavButton>
        <NavButton $w={36}><ReloadIcon /></NavButton>
        <AddressBar>
          <LockIcon />
          <Url>
            agorelik2.github.io<UrlPath>/js-quiz-app/</UrlPath>
          </Url>
          <StarIcon />
        </AddressBar>
        <Extensions>
          <ExtensionSlot $w={43}><CastIcon /></ExtensionSlot>
          <ExtensionSlot $w={37}><ClipboardIcon /></ExtensionSlot>
          <ExtensionSlot $w={37}><PuzzleIcon /></ExtensionSlot>
          <ExtensionSlot $w={51}><Avatar>A</Avatar></ExtensionSlot>
          <MenuDots />
        </Extensions>
      </Toolbar>

      <BookmarkBar>
        {bookmarks.map((b, i) => (
          <Bookmark key={i} $w={b.w}>
            <BookmarkIcon>{b.icon}</BookmarkIcon>
            <BookmarkLabel $ls={b.ls}>{b.label}</BookmarkLabel>
          </Bookmark>
        ))}
        <Overflow>»</Overflow>
      </BookmarkBar>

      <Page>
        <QuizCard>
          <Title>JavaScript Quiz for Fun</Title>
          <Timer>Timer: 71 seconds left</Timer>
          <Question>Which event occurs when the user clicks on an HTML element?</Question>
          <Choices>
            {choices.map((c) => (
              <Choice key={c.label} $ls={c.ls}>{c.label}</Choice>
            ))}
          </Choices>
        </QuizCard>
      </Page>

      <Taskbar>
        <StartButton><WindowsIcon /></StartButton>
        <SearchBox>
          <SearchIcon />
          <SearchText>Type here to search</SearchText>
        </SearchBox>
        <TaskButton $w={60}><CortanaIcon /></TaskButton>
        <TaskButton $w={62} $nudge={2}><TaskViewIcon /></TaskButton>
        <TaskButton $w={64}><OpenMark $open><FolderIcon /></OpenMark></TaskButton>
        <TaskButton $w={60} $nudge={1}><StoreIcon /></TaskButton>
        <TaskButton $w={64}>
          <IconWithBadge>
            <MailIcon />
            <Badge $x={18} $y={13}>57</Badge>
          </IconWithBadge>
        </TaskButton>
        <TaskButton $w={62} $nudge={2}><OfficeIcon /></TaskButton>
        <TaskButton $w={61} $focused $nudge={2}><ChromeIcon /></TaskButton>
        <TaskButton $w={63} $nudge={1}>
          <OpenMark $open>
            <IconWithBadge>
              <SlackIcon />
              <SlackBadge>10</SlackBadge>
            </IconWithBadge>
          </OpenMark>
        </TaskButton>
        <TaskButton $w={60}><GitBashIcon /></TaskButton>
        <TaskButton $w={64} $nudge={1}><ZoomIcon /></TaskButton>
        <TaskButton $w={60}><OpenMark $open><VsCodeIcon /></OpenMark></TaskButton>
        <TaskButton $w={64}><EdgeIcon /></TaskButton>
        <TaskButton $w={60}><NodeIcon /></TaskButton>
        <Tray>
          <TraySlot $w={38}>
            <svg width="16" height="10" viewBox="0 0 16 10">
              <path d="M.5 9L8 1.200 15.500 9" fill="none" stroke="#111" strokeWidth="1.300" />
            </svg>
          </TraySlot>
          <TraySlot $w={40}><CloudIcon /></TraySlot>
          <TraySlot $w={43}><BatteryIcon /></TraySlot>
          <TraySlot $w={37}><WifiIcon /></TraySlot>
          <TraySlot $w={45}><SpeakerIcon /></TraySlot>
          <TraySlot $w={43}><PenIcon /></TraySlot>
          <Language>ENG</Language>
          <Clock>
            <ClockTime>1:21 PM</ClockTime>
            <span>8/2/2020</span>
          </Clock>
          <TraySlot $w={72}>
            <IconWithBadge $indent={27}>
              <NotificationIcon />
              <Badge $x={7} $y={9}>27</Badge>
            </IconWithBadge>
          </TraySlot>
          <ShowDesktop />
        </Tray>
      </Taskbar>
    </Screen>
  );
}
